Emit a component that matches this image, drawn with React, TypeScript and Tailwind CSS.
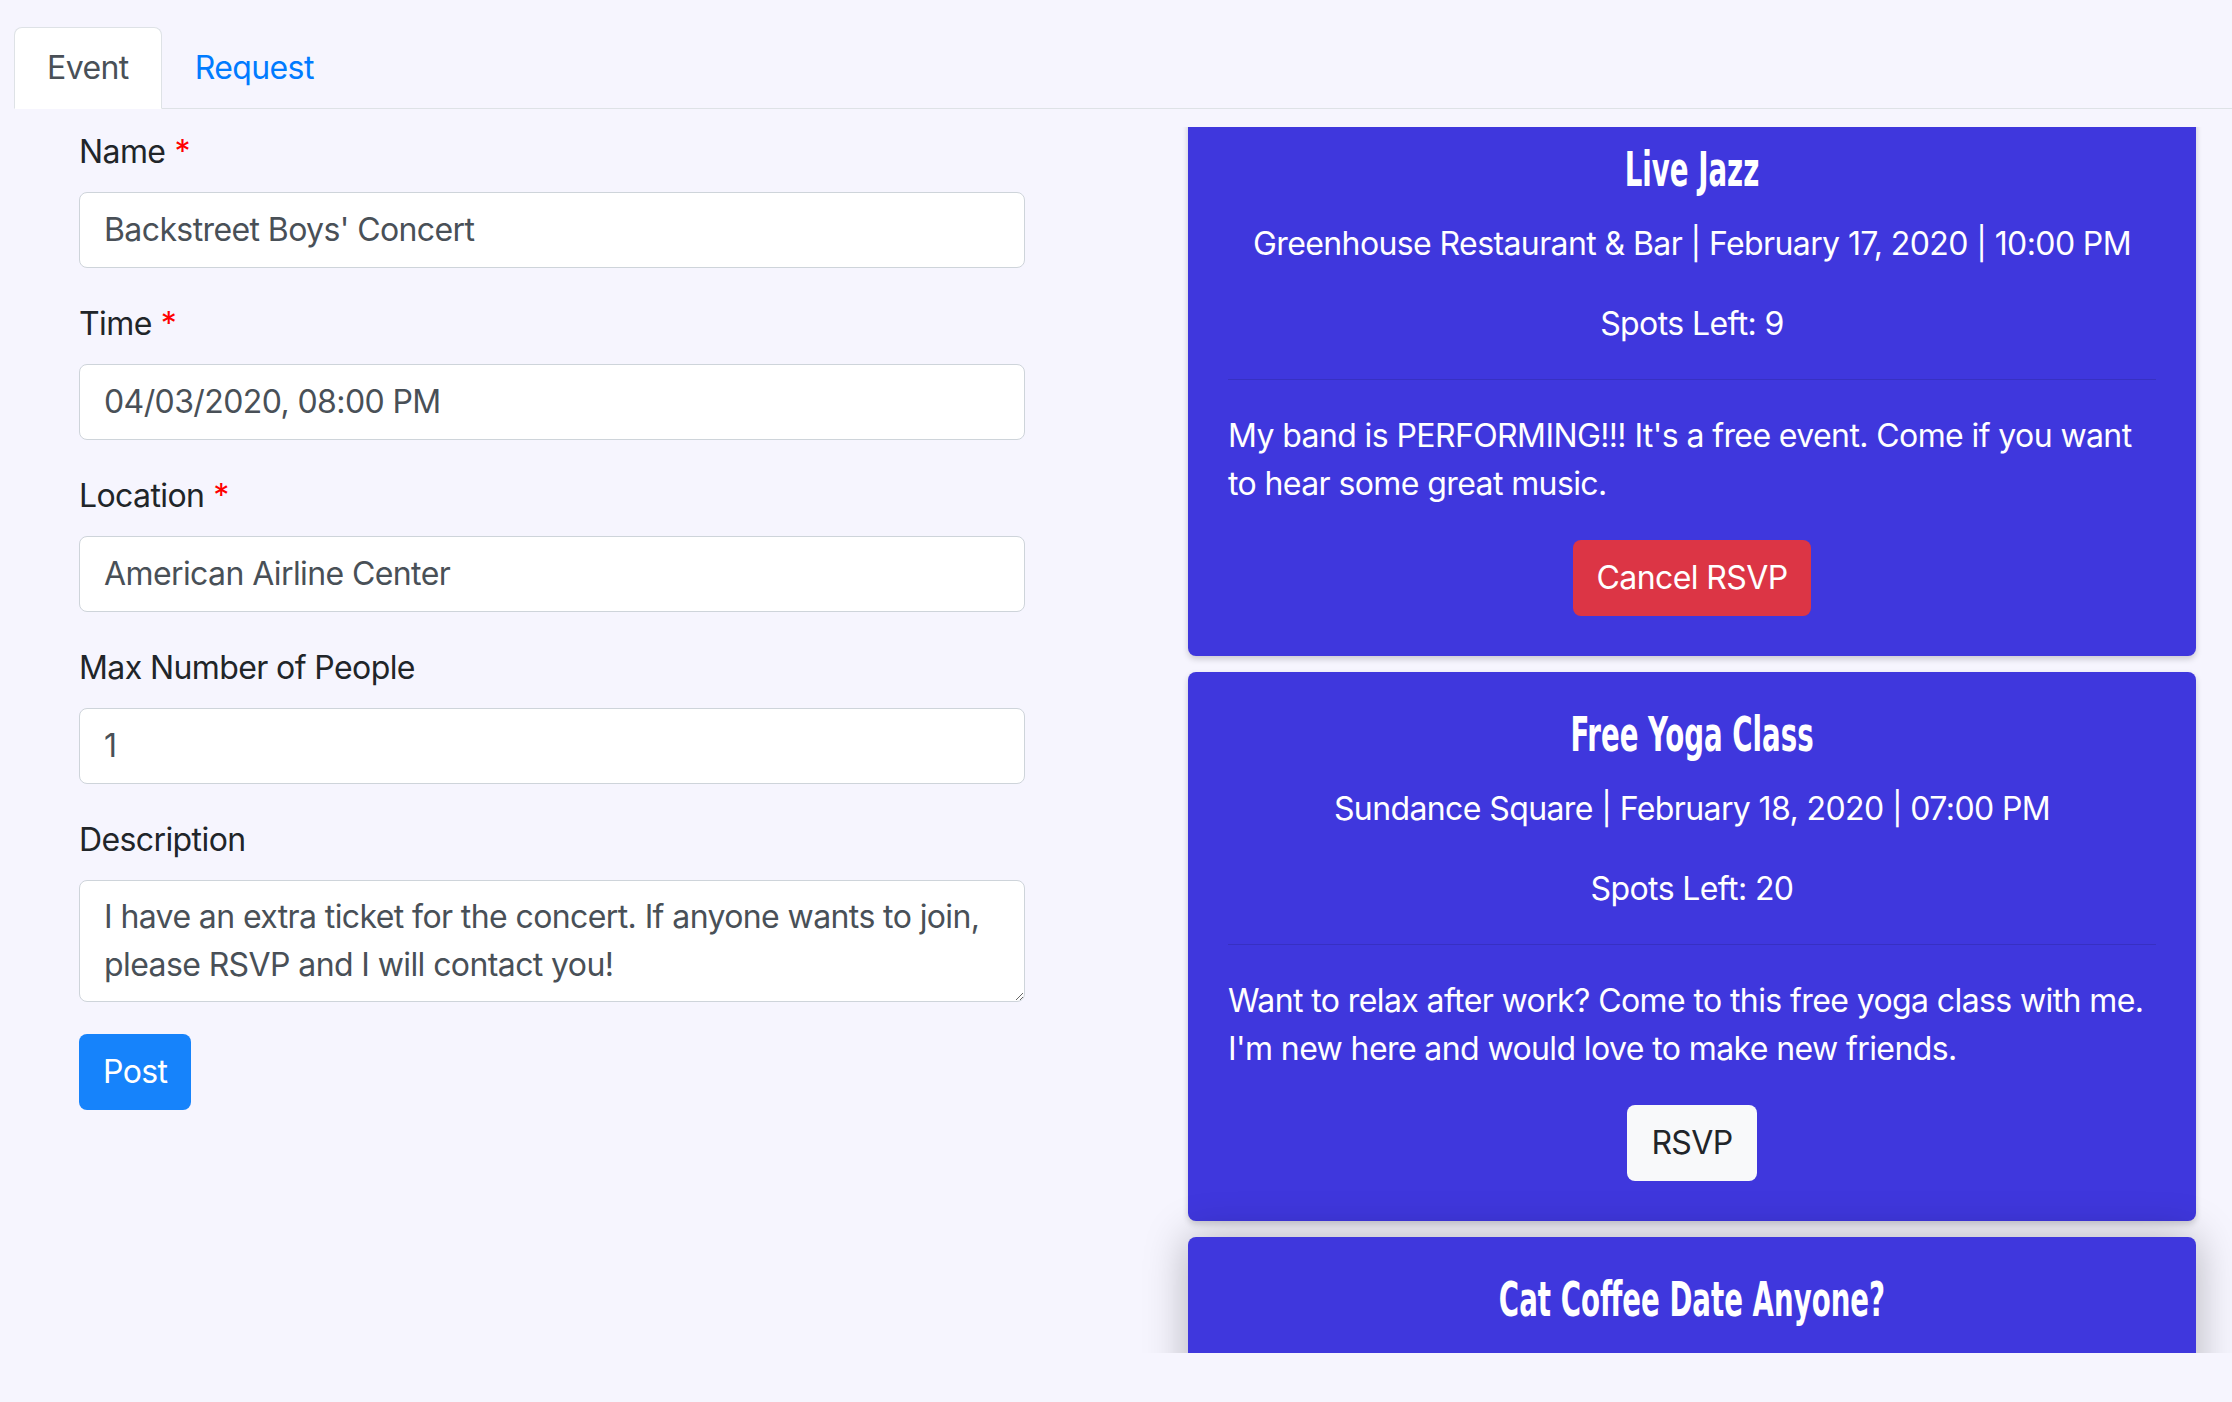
import React from 'react';

type EventCard = {
  title: string;
  meta: string;
  spots: number;
  body: string;
  going: boolean;
};

const EVENTS: EventCard[] = [
  {
    title: 'Live Jazz',
    meta: 'Greenhouse Restaurant & Bar | February 17, 2020 | 10:00 PM',
    spots: 9,
    body: "My band is PERFORMING!!! It's a free event. Come if you want to hear some great music.",
    going: true,
  },
  {
    title: 'Free Yoga Class',
    meta: 'Sundance Square | February 18, 2020 | 07:00 PM',
    spots: 20,
    body: "Want to relax after work? Come to this free yoga class with me. I'm new here and would love to make new friends.",
    going: false,
  },
  {
    title: 'Cat Coffee Date Anyone?',
    meta: 'Cat Café | February 20, 2020 | 03:00 PM',
    spots: 3,
    body: 'Looking for someone to grab a coffee with and pet some cats.',
    going: false,
  },
];

function Field({
  label,
  required,
  value,
}: {
  label: string;
  required?: boolean;
  value: string;
}) {
  return (
    <div className="mb-[32px]">
      <label className="block mb-[16px] text-[32px] leading-[48px] text-[#212529]">
        {label}
        {required && <span className="ml-[9px] text-[#ff0000]">*</span>}
      </label>
      <div className="h-[76px] flex items-center bg-white border border-[#ced4da] rounded-[8px] px-[24px] text-[32px] text-[#495057]">
        {value}
      </div>
    </div>
  );
}

function Card({ ev, lifted }: { ev: EventCard; lifted?: boolean }) {
  return (
    <div
      className={
        'flex flex-col shrink-0 bg-[#3f37dd] text-white rounded-[8px] px-[40px] pt-[38px] pb-[40px] ' +
        (lifted
          ? 'shadow-[0_0_44px_rgba(0,0,0,0.28)]'
          : 'shadow-[0_3px_6px_rgba(0,0,0,0.18)]')
      }
    >
      <h3 className="text-center text-[48px] leading-[48px] font-bold tracking-normal scale-x-[0.64] font-['Liberation_Sans_Narrow','DejaVu_Sans_Condensed',sans-serif]">
        {ev.title}
      </h3>
      <p className="mt-[27px] text-center text-[32px] leading-[48px]">{ev.meta}</p>
      <p className="mt-[32px] text-center text-[32px] leading-[48px]">Spots Left: {ev.spots}</p>
      <hr className="mt-[31px] border-0 border-t border-[rgba(0,0,0,0.12)]" />
      <p className="mt-[32px] text-[32px] leading-[48px]">{ev.body}</p>
      <div className="mt-[32px] flex justify-center">
        {ev.going ? (
          <button className="h-[76px] px-[24px] rounded-[8px] bg-[#dc3545] text-white text-[32px] leading-[48px]">
            Cancel RSVP
          </button>
        ) : (
          <button className="h-[76px] px-[24px] rounded-[8px] bg-[#f8f9fa] text-[#212529] text-[32px] leading-[48px]">
            RSVP
          </button>
        )}
      </div>
    </div>
  );
}

export default function App() {
  return (
    <div className="min-h-[1402px] bg-[#f6f5fe] tracking-[-0.6px] font-['Inter','Noto_Sans',sans-serif]">
      <div className="pt-[27px] pl-[14px]">
        <ul className="flex border-b border-[#dee2e6]">
          <li className="-mb-px">
            <span className="block px-[32px] py-[16px] text-[32px] leading-[48px] text-[#495057] bg-white border border-[#dee2e6] border-b-white rounded-t-[8px]">
              Event
            </span>
          </li>
          <li className="-mb-px">
            <span className="block px-[32px] py-[16px] text-[32px] leading-[48px] text-[#007bff] border border-transparent">
              Request
            </span>
          </li>
        </ul>
      </div>

      <div className="flex">
        <form className="w-[1116px] shrink-0 pl-[79px] pr-[91px] pt-[19px]">
          <Field label="Name" required value="Backstreet Boys' Concert" />
          <Field label="Time" required value="04/03/2020, 08:00 PM" />
          <Field label="Location" required value="American Airline Center" />
          <Field label="Max Number of People" value="1" />
          <div className="mb-[32px]">
            <label className="block mb-[16px] text-[32px] leading-[48px] text-[#212529]">
              Description
            </label>
            <textarea
              readOnly
              wrap="off"
              value={'I have an extra ticket for the concert. If anyone wants to join,\nplease RSVP and I will contact you!'}
              className="block w-full h-[122px] overflow-hidden bg-white border border-[#ced4da] rounded-[8px] px-[24px] py-[12px] text-[32px] leading-[48px] tracking-[-0.6px] text-[#495057] outline-none"
            />
          </div>
          <button
            type="button"
            className="h-[76px] px-[24px] rounded-[8px] bg-[#1683fb] text-white text-[32px] leading-[48px]"
          >
            Post
          </button>
        </form>

        <div className="flex-1 mt-[18px] h-[1226px] overflow-hidden">
          <div className="-mt-[20px] flex flex-col gap-[16px] pl-[72px] pr-[36px] pb-[60px]">
            {EVENTS.map((ev, i) => (
              <Card key={ev.title} ev={ev} lifted={i === 2} />
            ))}
          </div>
        </div>
      </div>
    </div>
  );
}
